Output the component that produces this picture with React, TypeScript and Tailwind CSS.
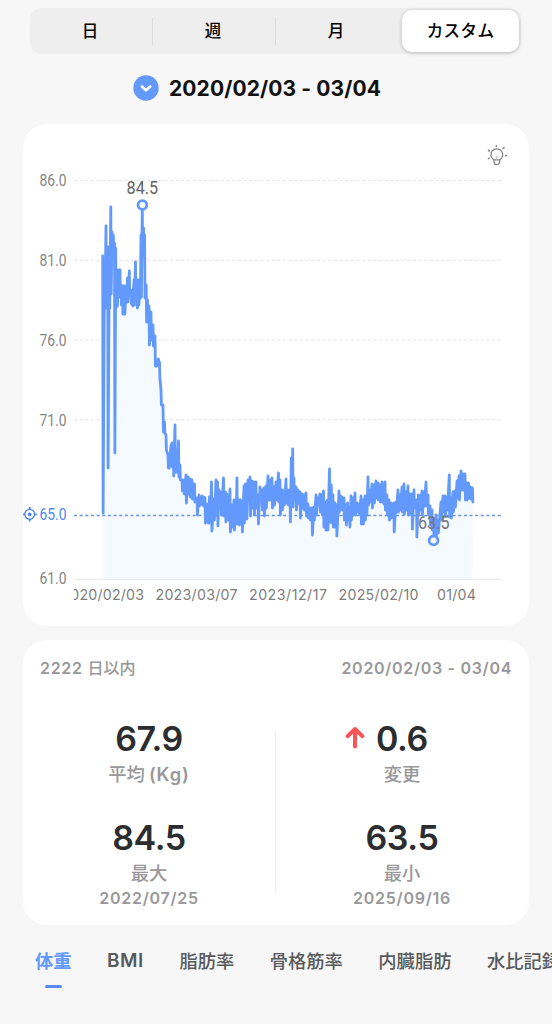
import React from "react";

const sans = "font-['Inter','Noto_Sans_CJK_JP',sans-serif]";

// Each entry is [x, high, low] in chart pixels.
const samples: [number, number, number][] = [
  [102.7, 256, 513], [104.5, 262, 308], [106, 226, 308], [107.7, 247, 468], [109.3, 247, 308],
  [110.8, 207, 294], [112, 232, 252], [113.3, 235, 250], [114.5, 243, 453], [115.7, 248, 308],
  [117, 270, 306], [118.5, 270, 297], [120, 270, 297], [121, 285, 305], [122.5, 286, 314],
  [124.5, 286, 314], [126, 286, 302], [127.5, 278, 302], [129.3, 271, 297], [131, 290, 304],
  [132.5, 290, 306], [134, 280, 305], [135.5, 262, 298], [137, 280, 308], [138.5, 280, 305],
  [140, 282, 298], [141, 235, 297], [142.3, 206, 256], [143.5, 228, 256], [144.6, 235, 298],
  [146.2, 285, 322], [147.5, 300, 322], [149, 306, 345], [151, 312, 340], [153, 325, 346],
  [155, 336, 366], [156.5, 360, 366], [158.5, 359, 364], [159.5, 362, 378], [161, 390, 405],
  [163, 405, 432], [164.5, 422, 433], [166, 435, 450], [168, 455, 468], [169, 460, 468],
  [171, 445, 465], [172, 443, 467], [173.3, 455, 476], [175, 425, 472], [176.5, 450, 472],
  [178.5, 441, 477], [180, 465, 480], [182, 480, 491], [184, 480, 494], [186, 475, 503],
  [188, 477, 494], [190, 479, 497], [192, 480, 499], [194.5, 484, 502], [197, 498, 515],
  [199, 495, 506], [202, 496, 505], [203.6, 497, 506], [205, 498, 523], [206.5, 504, 521], [208, 504, 523],
  [209.5, 497, 523], [211.5, 482, 531], [214, 499, 520], [216, 480, 515], [217.5, 482, 526],
  [219, 490, 507], [221, 492, 515], [223.5, 478, 516], [225.5, 492, 522], [226.8, 494, 515],
  [228, 500, 520], [230, 489, 532], [232, 505, 527], [234, 500, 530], [235.5, 503, 524],
  [237, 478, 524], [239, 500, 525], [240.5, 500, 522], [242, 502, 532], [244, 486, 523],
  [245.5, 484, 505], [246.5, 486, 519], [248, 480, 500], [250, 477, 516], [252, 481, 508],
  [254, 482, 515], [256, 482, 508], [258, 495, 524], [260, 487, 500], [262, 490, 510],
  [264, 488, 516], [266, 486, 508], [268, 476, 500], [270, 480, 500], [272, 478, 508],
  [274, 487, 505], [276, 482, 500], [278.5, 473, 502], [280, 480, 515], [282, 490, 510],
  [284, 491, 505], [286, 479, 503], [288, 490, 505], [290, 490, 522], [291.3, 458, 505],
  [292.7, 449, 507], [294, 478, 500], [296, 487, 510], [298, 490, 503], [300, 492, 518],
  [302, 494, 508], [304, 495, 510], [306, 493, 516], [308, 504, 518], [310, 508, 520],
  [312, 508, 535], [314, 507, 520], [316, 495, 515], [318, 498, 505], [320, 494, 512],
  [322, 495, 515], [323.5, 491, 527], [325.5, 502, 530], [327.5, 500, 530], [329.5, 469, 522],
  [331.3, 485, 523], [333, 495, 527], [335, 503, 527], [336.5, 505, 536], [339, 491, 512],
  [340.5, 496, 508], [342, 497, 510], [344, 498, 520], [346, 505, 525], [347.5, 503, 520],
  [349.5, 507, 527], [351, 496, 520], [353, 498, 515], [355, 493, 515], [357, 503, 512],
  [359, 504, 514], [361, 496, 524], [363, 500, 524], [365, 496, 520], [366.5, 498, 515],
  [368, 477, 505], [370, 490, 502], [372, 484, 508], [374, 485, 503], [376, 481, 498],
  [378, 483, 500], [380, 485, 502], [382, 482, 502], [383.6, 488, 504], [385, 482, 510],
  [387, 495, 515], [389, 500, 520], [391, 503, 518], [393.8, 503, 532], [396, 502, 512],
  [398, 490, 512], [400, 495, 510], [402, 487, 512], [404, 484, 514], [406, 492, 510],
  [408, 486, 515], [410, 494, 514], [412, 494, 529], [414, 490, 508], [416.5, 500, 537],
  [418.3, 495, 515], [420, 496, 510], [422, 491, 515], [424, 492, 506], [426, 482, 506],
  [428, 495, 515], [430, 506, 525], [432, 510, 530], [433.5, 520, 536], [436, 515, 535],
  [438, 520, 533], [441, 502, 520], [443, 496, 512], [445, 496, 516], [447, 497, 510],
  [449.3, 475, 517], [451, 498, 518], [453, 492, 512], [455, 491, 507], [457, 481, 498],
  [459, 476, 500], [461, 471, 490], [463, 474, 490], [465, 474, 500], [466.7, 483, 500],
  [468.5, 483, 498], [470.5, 487, 499], [472.5, 488, 502],
];

const points = samples
  .map(([x, high, low]) => `${x},${high} ${x + 0.4},${low}`)
  .join(" ");

const grid: [string, number][] = [
  ["86.0", 180.5], ["81.0", 260.3], ["76.0", 340], ["71.0", 419.7],
];

const dates: [string, number, number][] = [
  ["2020/02/03", 61.5, 82.5], ["2023/03/07", 155.5, 82], ["2023/12/17", 249, 78],
  ["2025/02/10", 338.5, 80], ["01/04", 437, 39],
];

function AxisLabel({ label, y, fill }: { label: string; y: number; fill: string }) {
  return (
    <text x="39.5" y={y} fontSize="16.3" fill={fill} textLength="27" lengthAdjust="spacingAndGlyphs" className="font-['Roboto',sans-serif]">
      {label}
    </text>
  );
}

function Chart() {
  return (
    <svg width="506" height="502" viewBox="23 124 506 502" className="block">
      <defs>
        <clipPath id="plot"><rect x="74" y="570" width="440" height="50" /></clipPath>
      </defs>
      {grid.map(([label, y]) => (
        <g key={label}>
          <AxisLabel label={label} y={y + 5.8} fill="#858586" />
          <path d={`M74 ${y}H501`} stroke="#e5e6ea" strokeWidth="1.2" strokeDasharray="3 2.65" />
        </g>
      ))}
      <path d="M74 579.3H501" stroke="#e9eaed" strokeWidth="1.2" />
      <AxisLabel label="61.0" y={584.2} fill="#858586" />
      <polygon points={`102.7,579 ${points} 472.5,579`} fill="#f5faff" />
      <path d="M74 515.5H501" stroke="#6a93e3" strokeWidth="1.3" strokeDasharray="3 2.65" />
      <AxisLabel label="65.0" y={520.3} fill="#5187e8" />
      <g fill="none" stroke="#5187e8" strokeWidth="1.4">
        <circle cx="29.7" cy="514.3" r="4.9" />
        <path d="M29.7 507v2.6M29.7 519v2.6M22.6 514.3h2.4M34.4 514.3h2.4" strokeWidth="1.8" />
        <circle cx="29.7" cy="514.3" r="1.2" fill="#5187e8" />
      </g>
      <polyline points={points} fill="none" stroke="#6299fb" strokeWidth="2.8" strokeLinejoin="round" strokeLinecap="round" />
      <circle cx="142.4" cy="205" r="4.4" fill="#fff" stroke="#6299fb" strokeWidth="2.8" />
      <circle cx="433.6" cy="540.4" r="4.4" fill="#fff" stroke="#6299fb" strokeWidth="2.8" />
      <g fontSize="17.5" fill="#636466" className="font-['Roboto',sans-serif]">
        <text x="126.6" y="193.5" textLength="31.5" lengthAdjust="spacingAndGlyphs">84.5</text>
        <text x="418" y="528.8" fill="#737477" textLength="31.5" lengthAdjust="spacingAndGlyphs">63.5</text>
      </g>
      <g fontSize="14.2" fill="#7d7d7e" clipPath="url(#plot)">
        {dates.map(([date, x, width]) => (
          <text key={date} x={x} y="599.8" textLength={width}>{date}</text>
        ))}
      </g>
      <g transform="translate(496.8 155.5)" fill="none" stroke="#858585" strokeWidth="1.3" strokeLinecap="round">
        <path d="M-3 4.3A5.9 5.9 0 1 1 3 4.3Z" strokeLinejoin="round" />
        <path d="M-2.8 4.5V6.2A2.8 2.9 0 0 0 2.8 6.2V4.5" />
        <path d="M0 .5V4" stroke="#bbb" strokeWidth="1" />
        <path d="M-.5-9.8V-8.9M6.3-7.1l.9-.8M8.7.3h.9M-7.4-4.5l-1-.6M-7.4 2.6l-1 .5" strokeWidth="1.5" />
      </g>
    </svg>
  );
}

function Segments() {
  return (
    <div className="ml-[30px] flex h-[46px] w-[491px] items-center rounded-[12px] bg-[#eeeeee] text-[16.5px] font-medium text-black">
      <div className="w-[122px] pr-[2px] text-center">日</div>
      <div className="h-[27px] w-px bg-[#dcdcdc]" />
      <div className="w-[122px] pr-[2px] text-center">週</div>
      <div className="h-[27px] w-px bg-[#dcdcdc]" />
      <div className="w-[122px] pr-[2px] text-center">月</div>
      <div className="ml-[4px] flex h-[42px] w-[117px] items-center justify-center rounded-[10px] bg-white tracking-[0.4px] shadow-[0_1px_4px_rgba(0,0,0,0.22)]">カスタム</div>
    </div>
  );
}

function Stat({ value, label, date, up }: { value: string; label: React.ReactNode; date?: string; up?: boolean }) {
  return (
    <div className="flex h-[99px] flex-col items-center text-[#98989a]">
      <div className="relative text-[34px] leading-[40px] font-semibold tracking-[-0.4px] text-[#2c2d2f]">
        {up && (
          <svg width="20" height="24" viewBox="0 0 20 24" fill="none" stroke="#fb5355" strokeWidth="4" strokeLinecap="round" strokeLinejoin="round" className="absolute top-[7px] -left-[31px]">
            <path d="M10 20.5V3M2.7 10.2 10 3l7.3 7.2" />
          </svg>
        )}
        {value}
      </div>
      <div className="mt-[2px] text-[18.3px] leading-[26px] font-medium">{label}</div>
      {date && <div className="mt-px text-[16px] leading-[22px] font-semibold tracking-[0.75px]">{date}</div>}
    </div>
  );
}

export default function App() {
  return (
    <main className={`${sans} flex h-[1024px] w-[552px] flex-col overflow-hidden bg-[#f7f7f7] pt-[8px]`}>
      <Segments />
      <div className="mt-[20px] ml-[133px] flex h-[28px] items-center">
        <svg width="26" height="26" viewBox="0 0 26 26">
          <circle cx="13" cy="13" r="12.7" fill="#6299fb" />
          <path d="m8.8 11.5 4.2 3.8 4.2-3.8" fill="none" stroke="#fff" strokeWidth="2.6" strokeLinecap="round" strokeLinejoin="round" />
        </svg>
        <h1 className="mt-[2px] ml-[10px] text-[21px] font-bold tracking-[0.1px] whitespace-nowrap text-[#111]">2020/02/03 - 03/04</h1>
      </div>
      <section className="mt-[22px] ml-[23px] h-[502px] w-[506px] shrink-0 rounded-[24px] bg-white">
        <Chart />
      </section>
      <section className="mt-[14px] ml-[23px] h-[285px] w-[506px] shrink-0 rounded-[24px] bg-white">
        <div className="flex h-[56px] items-center justify-between pr-[17px] pl-[17px] text-[16px] font-semibold tracking-[0.7px] text-[#98989a]">
          <span>2222 <span className="text-[16px] font-medium tracking-normal">日以内</span></span>
          <span>2020/02/03 - 03/04</span>
        </div>
        <div className="flex pt-[23px]">
          <div className="w-[252px]">
            <Stat value="67.9" label={<>平均<span className="ml-[4px] font-semibold tracking-[0.9px]">(Kg)</span></>} />
            <Stat value="84.5" label="最大" date="2022/07/25" />
          </div>
          <div className="mt-[13px] h-[161px] w-px bg-[#eeeeef]" />
          <div className="w-[252px]">
            <Stat value="0.6" label="変更" up />
            <Stat value="63.5" label="最小" date="2025/09/16" />
          </div>
        </div>
      </section>
      <nav className="mt-[22px] ml-[35px] flex gap-[35.5px] text-[18.3px] leading-[28px] font-medium whitespace-nowrap text-[#58595b]">
        <div className="flex flex-col items-center font-bold text-[#6299fb]">
          <span>体重</span>
          <span className="mt-[10px] h-[3px] w-[17px] rounded-full bg-[#568aec]" />
        </div>
        <span className="w-[37.5px] text-[19px] font-semibold tracking-[0.5px]">BMI</span>
        <span>脂肪率</span>
        <span>骨格筋率</span>
        <span>内臓脂肪</span>
        <span>水比記録</span>
      </nav>
    </main>
  );
}
